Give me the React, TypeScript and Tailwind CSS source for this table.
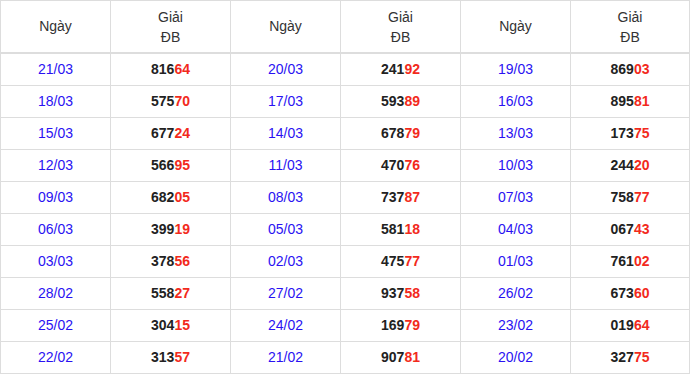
const rows: [string, string, string, string, string, string][] = [
  ["21/03", "81664", "20/03", "24192", "19/03", "86903"],
  ["18/03", "57570", "17/03", "59389", "16/03", "89581"],
  ["15/03", "67724", "14/03", "67879", "13/03", "17375"],
  ["12/03", "56695", "11/03", "47076", "10/03", "24420"],
  ["09/03", "68205", "08/03", "73787", "07/03", "75877"],
  ["06/03", "39919", "05/03", "58118", "04/03", "06743"],
  ["03/03", "37856", "02/03", "47577", "01/03", "76102"],
  ["28/02", "55827", "27/02", "93758", "26/02", "67360"],
  ["25/02", "30415", "24/02", "16979", "23/02", "01964"],
  ["22/02", "31357", "21/02", "90781", "20/02", "32775"],
]

function DateCell({ value }: { value: string }) {
  return (
    <div className="h-8 flex items-center justify-center border-r border-b border-[#dddddd] text-[#2a12f2]">
      {value}
    </div>
  )
}

function PrizeCell({ value }: { value: string }) {
  return (
    <div className="h-8 flex items-center justify-center border-r border-b border-[#dddddd] font-bold text-[#222222]">
      {value.slice(0, 3)}
      <span className="text-[#f22a1c]">{value.slice(3)}</span>
    </div>
  )
}

export default function App() {
  return (
    <div className="w-[690px] h-[375px] bg-white font-['Liberation_Sans',Arial,sans-serif] text-[14px]">
      <div className="grid grid-cols-[110px_120px_110px_120px_110px_119px] border-l border-t border-[#dddddd]">
        {[0, 1, 2].map((i) => (
          <div key={i} className="contents">
            <div className="h-[53px] flex items-center justify-center border-r border-b-2 border-[#dddddd] text-[#333333]">
              Ngày
            </div>
            <div className="h-[53px] flex flex-col items-center justify-center border-r border-b-2 border-[#dddddd] text-[#333333] leading-5">
              <span>Giải</span>
              <span>ĐB</span>
            </div>
          </div>
        ))}
        {rows.map((r, i) => (
          <div key={i} className="contents">
            <DateCell value={r[0]} />
            <PrizeCell value={r[1]} />
            <DateCell value={r[2]} />
            <PrizeCell value={r[3]} />
            <DateCell value={r[4]} />
            <PrizeCell value={r[5]} />
          </div>
        ))}
      </div>
    </div>
  )
}
